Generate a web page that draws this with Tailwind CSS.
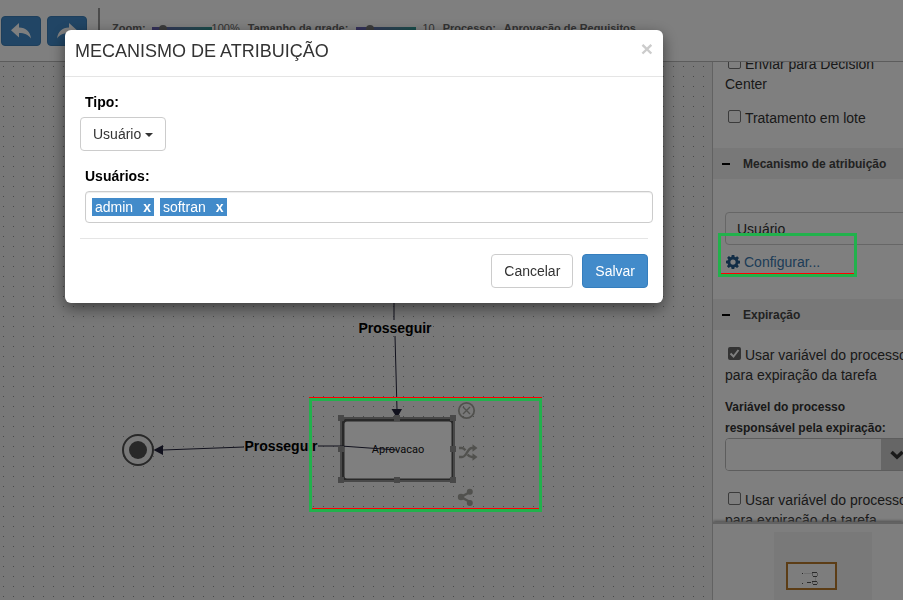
<!DOCTYPE html>
<html lang="pt-BR">
<head>
    <meta charset="UTF-8" />
    <meta name="viewport" content="width=device-width, initial-scale=1.0" />
    <title>Editor de Processo</title>
    <script src="https://cdn.jsdelivr.net/npm/@tailwindcss/browser@4"></script>
</head>
<body class="font-['Liberation_Sans',Arial,sans-serif] text-sm text-[#333]">
    <div class="h-screen flex flex-col overflow-hidden bg-white">

        <!-- Toolbar -->
        <header class="h-[62px] shrink-0 flex items-start border-b border-[#b8b8b8] overflow-hidden">
            <div class="flex gap-1.5 pl-px pt-4">
                <button type="button" aria-label="Desfazer" class="w-10 h-[30px] rounded bg-[#428bca] border border-[#3c7fb8] flex items-center justify-center">
                    <svg width="22" height="18" viewBox="0 0 22 18" fill="#fff"><path d="M9 1v4.500c7 0 11 4 12 11-3-4-6.500-5.500-12-5.500v4.500L1 8.200z"/></svg>
                </button>
                <button type="button" aria-label="Refazer" class="w-10 h-[30px] rounded bg-[#428bca] border border-[#3c7fb8] flex items-center justify-center">
                    <svg width="22" height="18" viewBox="0 0 22 18" fill="#fff"><path d="M13 1v4.500c-7 0-11 4-12 11 3-4 6.500-5.500 12-5.500v4.500l8-7.300z"/></svg>
                </button>
            </div>
            <div class="ml-[11px] mt-2 w-0.5 h-11 bg-[#999]"></div>
            <div class="flex items-center ml-3 mt-[21px] h-4 text-[11px] font-bold text-[#666] whitespace-nowrap">
                <label for="zoom">Zoom:</label>
                <input id="zoom" type="range" min="0" max="100" value="15" class="ml-1.5 w-[60px] h-1 appearance-none bg-linear-to-r from-[#6b5fb5] to-[#2f9c96] [&::-webkit-slider-thumb]:appearance-none [&::-webkit-slider-thumb]:size-2 [&::-webkit-slider-thumb]:rounded-full [&::-webkit-slider-thumb]:bg-[#777]" />
                <span class="font-normal">100%</span>
                <label for="grid" class="ml-2">Tamanho da grade:</label>
                <input id="grid" type="range" min="0" max="100" value="18" class="ml-2 w-[60px] h-1 appearance-none bg-linear-to-r from-[#6b5fb5] to-[#2f9c96] [&::-webkit-slider-thumb]:appearance-none [&::-webkit-slider-thumb]:size-2 [&::-webkit-slider-thumb]:rounded-full [&::-webkit-slider-thumb]:bg-[#777]" />
                <span class="ml-1.5 font-normal">10</span>
                <span class="ml-2">Processo:</span>
                <span class="ml-2">Aprovação de Requisitos</span>
            </div>
        </header>

        <main class="flex-1 min-h-0 flex">
            <!-- Diagram canvas -->
            <section class="flex-1 min-w-0 relative overflow-hidden bg-[#f0f0f0]">
                <svg class="absolute inset-0 size-full">
                    <defs>
                        <pattern id="dots" width="10" height="10" patternUnits="userSpaceOnUse">
                            <rect x="3" y="4" width="1" height="1" fill="#909090"/>
                        </pattern>
                    </defs>
                    <rect width="100%" height="100%" fill="url(#dots)"/>

                    <!-- end state -->
                    <circle cx="138" cy="388" r="15" fill="#f0f0f0" stroke="#505050" stroke-width="2"/>
                    <circle cx="138" cy="388" r="9" fill="#505050"/>

                    <!-- task -->
                    <rect x="343" y="358" width="110" height="60" rx="4" fill="#fff" stroke="#505050" stroke-width="3"/>
                    <rect x="341" y="356" width="113" height="63" fill="none" stroke="#909090" stroke-width="2"/>
                    <text x="398" y="391" text-anchor="middle" font-size="11" font-family="Roboto, sans-serif" fill="#111">Aprovacao</text>

                    <!-- transitions -->
                    <g stroke="#22223a" stroke-width="1" fill="none">
                        <path d="M394 200V258"/>
                        <path d="M395 274L397 348"/>
                        <path d="M397 388L341 384H318"/>
                        <path d="M244 385L163 388"/>
                    </g>
                    <path d="M391.500 347h10.500l-5 9z" fill="#22223a"/>
                    <path d="M153.500 388l9.500-5v10z" fill="#22223a"/>
                    <text x="395" y="271" text-anchor="middle" font-size="14" font-weight="bold" fill="#000">Prosseguir</text>
                    <text x="281" y="389" text-anchor="middle" font-size="14" font-weight="bold" fill="#000">Prosseguir</text>

                    <!-- resize handles -->
                    <g fill="#909090">
                        <rect x="338" y="353" width="6" height="6"/>
                        <rect x="394" y="353" width="6" height="6"/>
                        <rect x="450" y="353" width="6" height="6"/>
                        <rect x="338" y="384" width="6" height="6"/>
                        <rect x="450" y="384" width="6" height="6"/>
                        <rect x="338" y="415" width="6" height="6"/>
                        <rect x="394" y="415" width="6" height="6"/>
                        <rect x="450" y="415" width="6" height="6"/>
                    </g>

                    <!-- task actions: remove, shuffle, share -->
                    <g stroke="#a3a39c" fill="none">
                        <circle cx="466.500" cy="348.500" r="7.700" stroke-width="1.800"/>
                        <path d="M463 345l7 7M470 345l-7 7" stroke-width="1.400"/>
                        <path d="M459 395h3c5 0 5-9 10-9h2M459 386h3c1.500 0 2.500 1 3.500 2.200M467.500 392.500c1.200 1.600 2.500 2.500 4.500 2.500h2" stroke-width="2.400"/>
                        <path d="M470 430l-9 5 9 5" stroke-width="2.400"/>
                    </g>
                    <g fill="#a3a39c">
                        <path d="M472.500 382.300l5 3.700-5 3.700zM472.500 391.300l5 3.700-5 3.700z"/>
                        <circle cx="469.800" cy="429.800" r="3"/>
                        <circle cx="461" cy="435" r="3.200"/>
                        <circle cx="469.800" cy="441" r="3"/>
                    </g>
                </svg>
            </section>

            <!-- Properties -->
            <aside class="w-[191px] shrink-0 flex flex-col border-l border-[#c4c4c4] overflow-hidden">
                <div class="flex-1 min-h-0 overflow-hidden">
                    <div class="-mt-2 w-[213px] leading-5">
                        <div class="pl-3 pr-6 flex flex-col gap-3.5">
                            <label class="block"><input type="checkbox" class="appearance-none size-[13px] mx-[3px] rounded-xs border border-[#767676] bg-white" /> <span class="-ml-[3px]">Enviar para Decision Center</span></label>
                            <label class="block"><input type="checkbox" class="appearance-none size-[13px] mx-[3px] rounded-xs border border-[#767676] bg-white" /> <span class="-ml-[3px]">Tratamento em lote</span></label>
                        </div>

                        <h2 class="mt-5 h-[31px] pl-[9px] flex items-center bg-[#f0f0f0] text-xs font-bold text-[#444]">
                            <span class="w-2 h-0.5 mr-[13px] bg-black"></span>Mecanismo de atribuição
                        </h2>
                        <div class="px-3 pt-[33px]">
                            <button type="button" class="block w-full h-[33px] pl-[11px] border border-[#ccc] rounded text-left">Usuário</button>
                            <a href="#" class="mt-[7px] flex items-center text-[#3a78ae]">
                                <svg class="mr-1 ml-px" width="14" height="14" viewBox="0 0 16 16"><path fill="#245a8c" fill-rule="evenodd" d="M6.500 0h3l.4 2.200 1 .4 1.900-1.300 2 2-1.300 1.900.4 1 2.100.4v3l-2.200.4-.4 1 1.300 1.900-2 2-1.900-1.300-1 .4-.4 2.100h-3l-.4-2.200-1-.4-1.900 1.300-2-2 1.300-1.900-.4-1L0 9.500v-3l2.200-.4.4-1L1.300 3.200l2-2 1.900 1.300 1-.4zM8 5a3 3 0 100 6 3 3 0 000-6z"/></svg>
                                Configurar...
                            </a>
                        </div>

                        <h2 class="mt-[27px] h-[31px] pl-[9px] flex items-center bg-[#f0f0f0] text-xs font-bold text-[#444]">
                            <span class="w-2 h-0.5 mr-[13px] bg-black"></span>Expiração
                        </h2>
                        <div class="pl-3 pr-3 pt-[15px]">
                            <label class="block whitespace-nowrap"><span class="relative inline-block size-[13px] mx-[3px]"><input type="checkbox" checked class="absolute inset-0 appearance-none size-[13px] rounded-xs bg-[#666]" /><svg class="absolute inset-0" width="13" height="13" viewBox="0 0 13 13" fill="none" stroke="#fff" stroke-width="2"><path d="M2.500 6.500l3 3 5-6.500"/></svg></span> <span class="-ml-[3px]">Usar variável do processo</span><br>para expiração da tarefa</label>
                            <label for="variavel" class="block mt-3 text-xs leading-[21px] font-bold">Variável do processo<br>responsável pela expiração:</label>
                            <div class="-mt-px flex h-[33px] border border-[#bbb] rounded overflow-hidden">
                                <input id="variavel" type="text" class="flex-1 min-w-0 bg-white" />
                                <button type="button" aria-label="Abrir lista" class="w-8 bg-[#ccc] flex items-center justify-center">
                                    <svg width="14" height="10" viewBox="0 0 14 10" fill="none" stroke="#333" stroke-width="3.500"><path d="M1.500 2L7 7.200 12.500 2"/></svg>
                                </button>
                            </div>
                            <label class="block mt-[19px] whitespace-nowrap"><input type="checkbox" class="appearance-none size-[13px] mx-[3px] rounded-xs border border-[#767676] bg-white" /> <span class="-ml-[3px]">Usar variável do processo</span><br>para expiração da tarefa</label>
                        </div>
                    </div>
                </div>

                <!-- Minimap -->
                <div class="h-[78px] shrink-0 border-t-2 border-[#c4c4c4] shadow-[0_-1px_3px_#999] bg-[#fcfcfc] pl-[61px] pt-2">
                    <div class="w-[98px] h-full bg-[#f3f3f3] pl-3 pt-[30px]">
                        <svg width="51" height="28" viewBox="0 0 51 28">
                            <rect x="1" y="1" width="49" height="26" fill="#fafafa" stroke="#b87a2c" stroke-width="2"/>
                            <path d="M16 11.500h1M16 21.500h1M21 20.500h4M26 10.500h5M27 14.500h4M26 19.500h5M27 22.500h4" stroke="#555" stroke-width="1"/>
                            <path d="M18 11.500h8M29.500 15v4" stroke="#ddd"/>
                            <path d="M26.500 11v3M31.500 11v3M26.500 20v2M31.500 20v2" stroke="#aaa"/>
                        </svg>
                    </div>
                </div>
            </aside>
        </main>
    </div>

    <!-- Modal -->
    <div class="fixed inset-0 bg-black/50 pl-[65px] pt-[30px]">
        <div role="dialog" aria-labelledby="modal-title" class="w-full max-w-[598px] bg-white rounded-md shadow-[0_5px_15px_rgba(0,0,0,0.5)]">
            <div class="h-[47px] flex items-start justify-between px-2.5 pt-[9px] border-b border-[#e5e5e5]">
                <h1 id="modal-title" class="text-lg leading-6">MECANISMO DE ATRIBUIÇÃO</h1>
                <button type="button" aria-label="Fechar" class="text-[21px] leading-5 font-bold text-[#ccc]">×</button>
            </div>
            <form class="p-[15px] leading-5">
                <label for="tipo" class="block pl-[5px] font-bold text-black">Tipo:</label>
                <button id="tipo" type="button" class="mt-[5px] h-[34px] px-3 flex items-center gap-1 border border-[#ccc] rounded">
                    Usuário
                    <span class="border-x-4 border-t-4 border-x-transparent border-t-[#333] mt-0.5"></span>
                </button>
                <label for="usuarios" class="block mt-[15px] pl-[5px] font-bold text-black">Usuários:</label>
                <div class="mt-[5px] ml-[5px] -mr-[5px] h-8 px-1.5 flex items-center gap-1.5 border border-[#ccc] rounded shadow-[inset_0_1px_1px_rgba(0,0,0,0.075)]">
                    <span class="h-[18px] px-[3px] flex items-center gap-2.5 bg-[#428bca] text-white">admin <button type="button" aria-label="Remover admin" class="font-bold">x</button></span>
                    <span class="h-[18px] px-[3px] flex items-center gap-2.5 bg-[#428bca] text-white">softran <button type="button" aria-label="Remover softran" class="font-bold">x</button></span>
                    <input id="usuarios" type="text" class="flex-1 min-w-0 outline-none" />
                </div>
                <div class="mt-[15px] pt-[15px] flex justify-end gap-[9px] border-t border-[#e5e5e5]">
                    <button type="button" class="h-[34px] px-3 border border-[#ccc] rounded bg-white">Cancelar</button>
                    <button type="submit" class="h-[34px] px-3 border border-[#357ebd] rounded bg-[#428bca] text-white">Salvar</button>
                </div>
            </form>
        </div>
    </div>

    <!-- Highlights -->
    <div class="fixed left-[309px] top-[397px] w-[233px] border-t border-[#f00] pointer-events-none">
        <div class="h-[114px] border-3 border-[#22b14c] flex items-end"><div class="w-full h-px bg-[#f00]"></div></div>
    </div>
    <div class="fixed right-[46px] top-[233px] w-[139px] h-11 border-3 border-[#22b14c] flex items-end pointer-events-none">
        <div class="w-full h-px bg-[#f00]"></div>
    </div>
</body>
</html>
